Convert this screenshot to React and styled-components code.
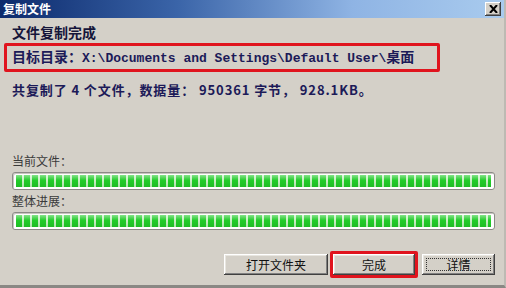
import React from "react";
import styled, { createGlobalStyle } from "styled-components";

const GlobalStyle = createGlobalStyle`
  html, body {
    margin: 0;
    padding: 0;
    background: #d4d0c8;
  }
`;

const cjk = `"Noto Sans CJK SC", "Liberation Sans", sans-serif`;
const mono = `"Liberation Mono", "Noto Sans CJK SC", monospace`;

const App = () => {
  return (
    <>
      <GlobalStyle />
      <Window>
        <TitleBar>
          <TitleText>复制文件</TitleText>
          <CloseButton aria-label="close">
            <svg width="9" height="8" viewBox="0 0 9 8">
              <path d="M1 0 L8 8 M8 0 L1 8" stroke="#000" strokeWidth="2" />
            </svg>
          </CloseButton>
        </TitleBar>

        <Content>
          <Heading>文件复制完成</Heading>
          <Marked>
            <PathLine>
              <Cjk>目标目录：</Cjk>X:\Documents and Settings\Default User\<Cjk>桌面</Cjk>
            </PathLine>
          </Marked>
          <Stats>共复制了 4 个文件，数据量： 950361 字节， 928.1KB。</Stats>

          <Label $top={55}>当前文件：</Label>
          <Progress />
          <Label $top={3}>整体进展：</Label>
          <Progress />
        </Content>

        <Footer>
          <Button $width={104}>打开文件夹</Button>
          <Marked $button>
            <Button $width={82}>完成</Button>
          </Marked>
          <Button $width={73} $focused>详情</Button>
        </Footer>
      </Window>
    </>
  );
};

export default App;

const Window = styled.div`
  width: 506px;
  height: 288px;
  display: flex;
  flex-direction: column;
  background: #d4d0c8;
  box-sizing: border-box;
  border-bottom: 3px solid #8a8884;
  border-right: 2px solid #bdbab3;
  overflow: hidden;
`;

const TitleBar = styled.div`
  height: 18px;
  display: flex;
  align-items: center;
  justify-content: space-between;
  padding: 0 3px 0 3px;
  background: linear-gradient(90deg, #0c2a6c 0%, #3a64a8 35%, #8fb4e4 70%, #a9cbee 100%);
`;

const TitleText = styled.span`
  font-family: ${cjk};
  font-weight: 700;
  font-size: 12px;
  line-height: 14px;
  color: #fff;
`;

const CloseButton = styled.div`
  width: 16px;
  height: 14px;
  display: flex;
  align-items: center;
  justify-content: center;
  background: #d4d0c8;
  box-shadow: inset -1px -1px #404040, inset 1px 1px #fff, inset -2px -2px #808080;
`;

const Content = styled.div`
  display: flex;
  flex-direction: column;
  align-items: flex-start;
  padding: 0 11px 0 12px;
`;

const Heading = styled.div`
  margin-top: 5px;
  font-family: ${cjk};
  font-size: 14px;
  line-height: 19px;
  font-weight: 700;
  color: #15153a;
`;

const Marked = styled.div`
  border: 3px solid #e0141e;
  border-radius: 2px;
  box-sizing: border-box;
  ${({ $button }) =>
    $button
      ? `display: flex;`
      : `
    margin: 1px 0 0 -8px;
    width: 436px;
    height: 29px;
    display: flex;
    align-items: center;
    padding-left: 5px;
  `}
`;

const PathLine = styled.div`
  font-family: ${mono};
  font-weight: 700;
  font-size: 13px;
  line-height: 16px;
  color: #1c1a58;
  white-space: nowrap;
`;

const Cjk = styled.span`
  font-family: ${cjk};
  font-size: 14px;
  font-weight: 700;
`;

const Stats = styled.div`
  margin-top: 9px;
  font-family: ${cjk};
  font-weight: 700;
  font-size: 13px;
  line-height: 17px;
  letter-spacing: 0.9px;
  color: #1c1a58;
  white-space: nowrap;
`;

const Label = styled.div`
  margin-top: ${({ $top }) => $top}px;
  margin-bottom: 3px;
  font-family: ${cjk};
  font-size: 12px;
  line-height: 16px;
  color: #3a3a3a;
`;

const Progress = styled.div`
  width: 483px;
  height: 18px;
  box-sizing: border-box;
  border: 1px solid #8c8a86;
  border-radius: 3px;
  background-color: #fff;
  padding: 2px 3px;
  box-shadow: inset 1px 1px #c8c6c0;

  &::before {
    content: "";
    display: block;
    height: 100%;
    background:
      linear-gradient(180deg, rgba(255, 255, 255, 0.45) 0%, rgba(255, 255, 255, 0) 45%, rgba(0, 80, 0, 0.12) 100%),
      repeating-linear-gradient(90deg, #22cc2a 0px, #22cc2a 6px, #c8f0c4 6px, #c8f0c4 8px);
  }
`;

const Footer = styled.div`
  margin-top: auto;
  margin-bottom: 7px;
  display: flex;
  align-items: center;
  justify-content: flex-end;
  gap: 2px;
  padding-right: 9px;
`;

const Button = styled.div`
  position: relative;
  width: ${({ $width }) => $width}px;
  height: 21px;
  display: flex;
  align-items: center;
  justify-content: center;
  font-family: ${cjk};
  font-size: 12px;
  color: #111;
  background: #d4d0c8;
  box-shadow: inset -1px -1px #404040, inset 1px 1px #fff, inset -2px -2px #808080, inset 2px 2px #e8e6e0;

  ${({ $focused }) =>
    $focused &&
    `
    margin-left: 2px;
    &::after {
      content: "";
      position: absolute;
      inset: 4px;
      border: 1px dotted #333;
    }
  `}
`;
